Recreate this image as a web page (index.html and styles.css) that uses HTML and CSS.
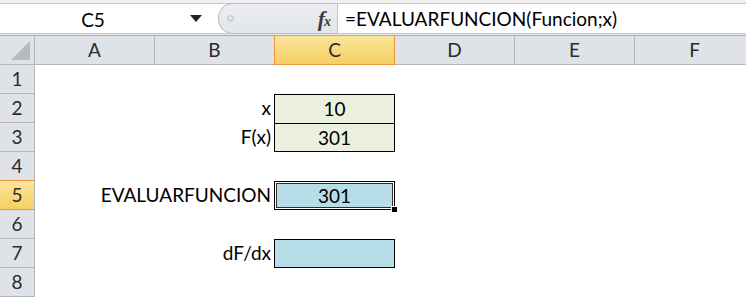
FILE: index.html
```html
<!DOCTYPE html>
<html>
<head>
<meta charset="utf-8">
<link rel="stylesheet" href="styles.css">
</head>
<body>
<div class="app">
  <div class="topstrip"></div>
  <div class="fbar">
    <div class="namebox">
      <span class="name">C5</span>
      <svg class="arrow" width="12" height="7" viewBox="0 0 12 7"><path d="M0 0H12L6 7Z" fill="#222"/></svg>
    </div>
    <div class="fxarea">
      <span class="grip"></span>
      <span class="fx"><i>f</i><i class="x">x</i></span>
    </div>
    <div class="formula">=EVALUARFUNCION(Funcion;x)</div>
  </div>
  <div class="gap"></div>
  <div class="sheet">
    <div class="corner"><span class="tri"></span></div>
    <div class="ch">A</div>
    <div class="ch">B</div>
    <div class="ch sel">C</div>
    <div class="ch">D</div>
    <div class="ch">E</div>
    <div class="ch">F</div>

    <div class="rh">1</div><div class="c"></div><div class="c"></div><div class="c"></div><div class="c"></div><div class="c"></div><div class="c"></div>

    <div class="rh">2</div><div class="c"></div><div class="c lbl"><span>x</span></div><div class="c val green top">10</div><div class="c"></div><div class="c"></div><div class="c"></div>

    <div class="rh">3</div><div class="c"></div><div class="c lbl"><span>F(x)</span></div><div class="c val green bot">301</div><div class="c"></div><div class="c"></div><div class="c"></div>

    <div class="rh">4</div><div class="c"></div><div class="c"></div><div class="c"></div><div class="c"></div><div class="c"></div><div class="c"></div>

    <div class="rh sel">5</div><div class="c"></div><div class="c lbl"><span>EVALUARFUNCION</span></div><div class="c val blue active">301<span class="handle"></span></div><div class="c"></div><div class="c"></div><div class="c"></div>

    <div class="rh">6</div><div class="c"></div><div class="c"></div><div class="c"></div><div class="c"></div><div class="c"></div><div class="c"></div>

    <div class="rh">7</div><div class="c"></div><div class="c lbl"><span>dF/dx</span></div><div class="c val blue box"></div><div class="c"></div><div class="c"></div><div class="c"></div>

    <div class="rh">8</div><div class="c"></div><div class="c"></div><div class="c"></div><div class="c"></div><div class="c"></div><div class="c"></div>
  </div>
</div>
</body>
</html>
```
FILE: styles.css
```css
* { box-sizing: border-box; }
html, body { margin: 0; padding: 0; background: #fff; }
body { font-family: Lato, "Open Sans", sans-serif; color: #000; overflow: hidden; }
.app { width: 746px; height: 301px; overflow: hidden; }

.topstrip { height: 3px; background: #f0f0f0; }
.fbar {
  display: flex;
  height: 31px;
  border-top: 1px solid #c6c6c6;
  border-bottom: 1px solid #c6c6c6;
  background: #fff;
}
.namebox {
  width: 218px;
  display: flex;
  align-items: center;
}
.name {
  width: 186px;
  text-align: center;
  font-size: 19px;
  padding-top: 1px;
}
.arrow { margin-left: 4px; }
.fxarea {
  width: 120px;
  background: linear-gradient(#eceef1, #e2e5e9);
  border: 1px solid #b9bcc0;
  border-right: 1px solid #c6c6c6;
  border-radius: 15px 0 0 15px;
  margin: -1px 0;
  display: flex;
  align-items: center;
  justify-content: space-between;
  padding: 0 7px 0 8px;
}
.grip {
  width: 7px; height: 7px; border-radius: 50%;
  background: radial-gradient(circle at 50% 40%, #f6f6f6, #b9bcc1);
  border: 1px solid #c6c9cd;
}
.fx {
  font-family: "Liberation Serif", serif;
  font-size: 22px;
  color: #3c3c3c;
  font-weight: bold;
  letter-spacing: -1px;
  line-height: 1;
}
.fx .x { font-size: 14px; }
.formula {
  flex: 1;
  padding-left: 7px;
  font-size: 19px;
  display: flex;
  align-items: center;
  white-space: nowrap;
}

.gap { height: 2px; background: #e8eaed; border-bottom: 1px solid #a9acb0; }

.sheet {
  display: grid;
  grid-template-columns: 35px repeat(6, 120px);
  grid-template-rows: 29px repeat(8, 29px);
}
.corner {
  background: #dfe3e8;
  border-right: 1px solid #b3b7bd;
  border-bottom: 1px solid #b3b7bd;
  position: relative;
}
.tri {
  position: absolute; right: 4px; bottom: 4px;
  width: 0; height: 0;
  border-left: 19px solid transparent;
  border-bottom: 19px solid #b6babf;
}
.ch, .rh {
  background: #dfe3e8;
  border-right: 1px solid #b3b7bd;
  border-bottom: 1px solid #b3b7bd;
  text-align: center;
  font-size: 19px;
  line-height: 28px;
  color: #2b2b2b;
}
.ch.sel {
  background: linear-gradient(#fbe59c, #f6cf63);
  border-left: 1px solid #f29536;
  border-right: 1px solid #f29536;
  border-bottom: 1px solid #f29536;
  margin-left: -1px;
}
.rh.sel {
  background: linear-gradient(#fbe59c, #f6cf63);
  border-top: 1px solid #f29536;
  border-bottom: 1px solid #f29536;
  margin-top: -1px;
}
.c {
  font-size: 19px;
  line-height: 28px;
  white-space: nowrap;
  position: relative;
}
.lbl {
  display: flex;
  justify-content: flex-end;
  padding-right: 4px;
}
.lbl span { flex: none; }
.val { text-align: center; margin-left: -1px; z-index: 1; }
.green { background: #ebf1de; }
.blue { background: #b7dde8; }
.top { border: 1px solid #000; border-bottom: none; line-height: 28px; }
.bot { border: 1px solid #000; line-height: 27px; }
.box { border: 1px solid #000; }
.active {
  border: 1px solid #000;
  box-shadow: inset 0 0 0 1px #fff, inset 0 0 0 2px #3b2a22;
  line-height: 27px;
}
.handle {
  position: absolute;
  right: -4px; bottom: -4px;
  width: 5px; height: 5px;
  background: #000;
  border: 1px solid #fff;
  box-sizing: content-box;
}
```
